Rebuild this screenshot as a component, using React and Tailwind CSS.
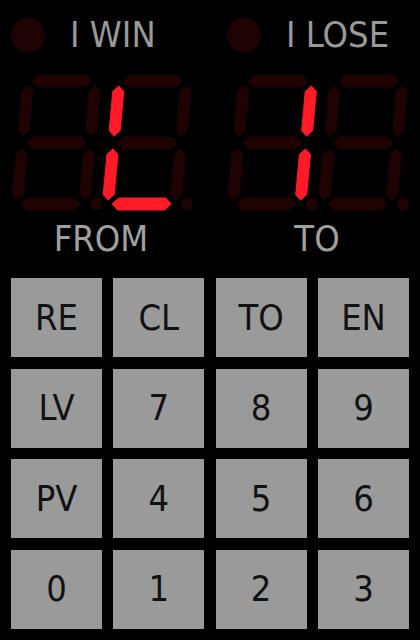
const DIM = "#1f0202";
const LIT = "#ff1a28";

// segment order: a (top), b (upper right), c (lower right), d (bottom), e (lower left), f (upper left), g (middle)
function hSeg(x1, x2, yc, t = 12, b = 6) {
  const h = t / 2;
  return `${x1},${yc} ${x1 + b},${yc - h} ${x2 - b},${yc - h} ${x2},${yc} ${x2 - b},${yc + h} ${x1 + b},${yc + h}`;
}

function vSeg(xc, y1, y2, w = 11, b = 5.5) {
  const h = w / 2;
  return `${xc},${y1} ${xc + h},${y1 + b} ${xc + h},${y2 - b} ${xc},${y2} ${xc - h},${y2 - b} ${xc - h},${y1 + b}`;
}

const SEGS = {
  a: hSeg(26.8, 85.8, 81),
  b: vSeg(90, 86, 136),
  c: vSeg(90, 149, 200),
  d: hSeg(26.8, 85.8, 204),
  e: vSeg(22.5, 149, 200),
  f: vSeg(22.5, 86, 136),
  g: hSeg(26.8, 85.8, 143),
};

function Digit({ on = "" }) {
  return (
    <svg width="91" height="145" viewBox="10 70 91 145" className="block">
      <g transform="translate(0 143) skewX(-5.3) translate(0 -143)">
        {Object.entries(SEGS).map(([k, pts]) => (
          <polygon
            key={k}
            points={pts}
            fill={on.includes(k) ? LIT : DIM}
            stroke={on.includes(k) ? LIT : DIM}
            strokeWidth="1"
            strokeLinejoin="round"
          />
        ))}
      </g>
      <circle cx="96.3" cy="204" r="6" fill={DIM} />
    </svg>
  );
}

function Display({ label, caption, digits }) {
  return (
    <div className="ml-[10px] w-[182px] flex flex-col">
      <div className="mt-[17px] h-[36px] flex items-center">
        <div className="ml-[1px] w-[34px] h-[34px] rounded-full bg-[#1f0202]" />
        <span className="ml-[25px] text-[36px] leading-none text-[#999999]">{label}</span>
      </div>
      <div className="mt-[17px] flex">
        {digits.map((d, i) => (
          <Digit key={i} on={d} />
        ))}
      </div>
      <div className="mt-[6px] text-center text-[36px] leading-none text-[#a0a0a0]">{caption}</div>
    </div>
  );
}

const KEYS = ["RE", "CL", "TO", "EN", "LV", "7", "8", "9", "PV", "4", "5", "6", "0", "1", "2", "3"];

export default function App() {
  return (
    <div
      className="w-[420px] h-[640px] bg-black flex flex-col overflow-hidden"
      style={{ fontFamily: '"DejaVu Sans Condensed", "DejaVu Sans", sans-serif' }}
    >
      <div className="grid grid-cols-[216px_1fr]">
        <Display label="I WIN" caption="FROM" digits={["", "efd"]} />
        <Display label="I LOSE" caption="TO" digits={["bc", ""]} />
      </div>

      <div className="mt-auto h-[351px] mb-[11px] px-[11px] grid grid-cols-4 grid-rows-4 gap-[11.33px]">
        {KEYS.map((k) => (
          <button
            key={k}
            className="bg-[#9a9a9a] text-[#111111] text-[36px] leading-none flex items-center justify-center"
          >
            {k}
          </button>
        ))}
      </div>
    </div>
  );
}
